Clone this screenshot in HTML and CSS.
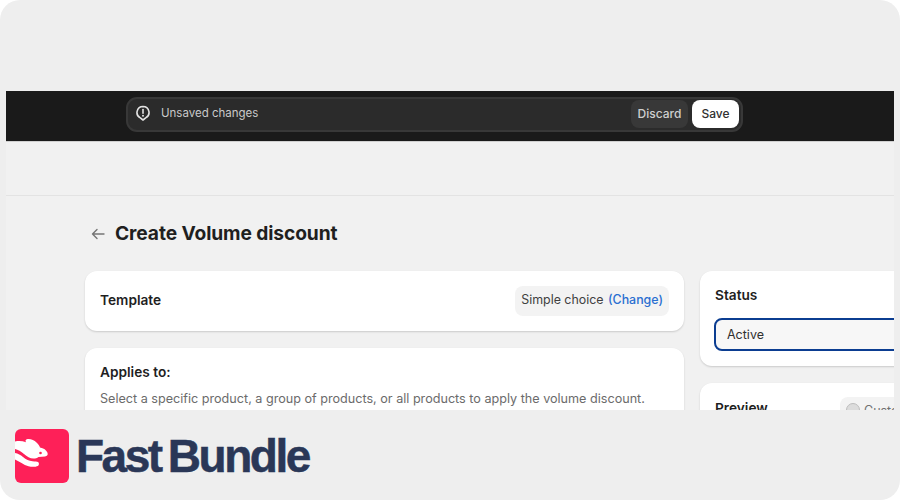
FILE: index.html
```html
<!DOCTYPE html>
<html lang="en">
<head>
<meta charset="utf-8">
<title>Create Volume discount</title>
<link rel="stylesheet" href="styles.css">
</head>
<body>
<div class="frame">
  <div class="shot">
    <div class="topbar">
      <div class="savebar">
        <div class="savebar-msg">
          <svg class="alert-icon" viewBox="0 0 16 16" width="16" height="16" fill="none">
            <path d="M8 1.500a6 6 0 0 1 2.700 11.350L8 15l-2.700-2.150A6 6 0 0 1 8 1.500z" stroke="#e3e3e3" stroke-width="1.600" stroke-linejoin="round"/>
            <path d="M8 4.500v3.800" stroke="#e3e3e3" stroke-width="1.600" stroke-linecap="round"/>
            <circle cx="8" cy="10.700" r="1" fill="#e3e3e3"/>
          </svg>
          <span>Unsaved changes</span>
        </div>
        <div class="savebar-actions">
          <span class="btn btn-discard">Discard</span>
          <span class="btn btn-save">Save</span>
        </div>
      </div>
    </div>
    <div class="strip"></div>
    <div class="page">
      <div class="page-head">
        <svg class="back" viewBox="0 0 14 12" width="14" height="12" fill="none">
          <path d="M13 6H1.500M6 1.500 1.500 6 6 10.500" stroke="#757575" stroke-width="1.400" stroke-linecap="round" stroke-linejoin="round"/>
        </svg>
        <h1>Create Volume discount</h1>
      </div>
      <div class="columns">
        <div class="col-main">
          <section class="card card-template">
            <h2>Template</h2>
            <div class="chip">Simple choice <a class="link">(Change)</a></div>
          </section>
          <section class="card card-applies">
            <h2>Applies to:</h2>
            <p>Select a specific product, a group of products, or all products to apply the volume discount.</p>
          </section>
        </div>
        <div class="col-side">
          <section class="card card-status">
            <h2>Status</h2>
            <div class="select">Active</div>
          </section>
          <section class="card card-preview">
            <h2>Preview</h2>
            <div class="custom-chip"><span class="dot"></span>Customize</div>
          </section>
        </div>
      </div>
    </div>
  </div>
  <div class="brand">
    <svg class="brand-mark" viewBox="0 0 54 54" width="54" height="54">
      <rect width="54" height="54" rx="6" fill="#fe2058"/>
      <path fill="#fff" d="M0 12.500c4-.8 7.500-.5 11 .8-.8-1.500-.5-2.600.8-3C15 9.500 19 11 21.500 13.500c1.800 1.800 3 3.500 3.500 5 3.500.6 6.500 2.600 7.500 5.300.7 2-.3 3.400-2.500 3.700-2 .3-4.500.2-6.500.5-1.500 1-3 1.500-5 1.500-3.500 0-6.500-2-9.500-4.500C6 22.500 3 20.500 0 20z"/>
      <circle cx="25.500" cy="24" r="1.300" fill="#fe2058"/>
      <path fill="#fff" d="M0 24c3 .5 5.500 2 8 4 3 2.500 6 3.800 9.500 4.200 2.500.3 4.500.2 5.500.8 1.300.8 1.300 3.300-.2 4-2 1-6 1.200-9.300.3C8.500 35.800 4.500 32.500 0 30.500z"/>
    </svg>
    <span class="brand-name">Fast Bundle</span>
  </div>
</div>
</body>
</html>
```
FILE: styles.css
```css
* { box-sizing: border-box; }
html, body { margin: 0; padding: 0; background: #fff; }
body { width: 900px; height: 500px; overflow: hidden; font-family: Inter, "Liberation Sans", sans-serif; color: #1a1a1a; }
.frame { width: 900px; height: 500px; background: #eeeeee; border-radius: 20px; padding-top: 91px; overflow: hidden; display: flex; flex-direction: column; }
.shot { height: 319px; margin: 0 6px; background: #f1f1f1; overflow: hidden; flex: none; }
.topbar { height: 50px; background: #1a1a1a; padding: 6px 0 0 120px; box-shadow: 0 1px 0 #d0d0d0; }
.savebar { width: 617px; height: 35px; background: #2b2b2b; border: 2px solid #383838; border-radius: 11px; display: flex; align-items: center; justify-content: space-between; padding: 0 2px 0 7px; }
.savebar-msg { display: flex; align-items: center; gap: 10px; font-size: 11.500px; color: #c9c9c9; margin-top: -3px; }
.alert-icon { flex: none; }
.savebar-actions { display: flex; gap: 4px; margin-top: -1px; }
.btn { height: 28px; border-radius: 8px; font-size: 12px; font-weight: 500; display: flex; align-items: center; justify-content: center; padding-bottom: 1px; }
.btn-discard { width: 57px; background: #383838; color: #cfcfcf; }
.btn-save { width: 47px; background: #fff; color: #303030; }
.strip { height: 55px; border-bottom: 1px solid #e3e3e3; }
.page { padding: 0 0 0 79px; }
.page-head { height: 75px; display: flex; align-items: center; }
.back { margin-left: 6px; margin-right: 10px; flex: none; }
h1 { margin: -2px 0 0; font-size: 19.200px; font-weight: 700; letter-spacing: -0.100px; color: #1f1f1f; }
.columns { display: flex; gap: 16px; }
.col-main { width: 599px; flex: none; display: flex; flex-direction: column; gap: 17px; }
.col-side { width: 300px; flex: none; display: flex; flex-direction: column; gap: 17px; }
.card { background: #fff; border-radius: 12px; box-shadow: 0 1px 2px rgba(0,0,0,0.16); }
h2 { margin: 0; font-size: 13.700px; font-weight: 600; color: #1f1f1f; }
.card-template { height: 60px; display: flex; align-items: center; justify-content: space-between; padding: 0 15px; }
.card-template h2 { margin-top: -2px; }
.chip { height: 30px; margin-top: -1px; background: #f3f3f3; border-radius: 8px; display: flex; align-items: center; gap: 4.500px; padding: 0 6px 3px; font-size: 12.400px; color: #404040; }
.link { color: #2a6fd1; font-weight: 500; }
.card-applies { height: 100px; padding: 16px 15px; }
.card-applies p { margin: 11px 0 0; font-size: 12.620px; color: #6b6b6b; white-space: nowrap; }
.card-status { height: 95px; padding: 16px 15px; }
.select { width: 300px; height: 33px; margin: 15px 0 0 -1px; padding: 0 0 1px 11px; border: 2px solid #0b3d91; border-radius: 8px; background: #f7f7f7; display: flex; align-items: center; font-size: 12.500px; color: #303030; }
.card-preview { height: 80px; padding: 17px 15px; position: relative; }
.custom-chip { position: absolute; left: 140px; top: 14px; height: 26px; padding-left: 6px; background: #f3f3f3; border-radius: 8px; display: flex; align-items: center; gap: 4px; font-size: 12.500px; color: #707070; white-space: nowrap; }
.dot { width: 14px; height: 14px; border-radius: 50%; background: #dcdcdc; border: 1px solid #bdbdbd; }
.brand { height: 90px; display: flex; align-items: flex-start; padding: 19px 0 0 15px; }
.brand-mark { flex: none; display: block; }
.brand-name { margin-left: 7px; font-family: "Liberation Sans", Arial, sans-serif; font-size: 46px; line-height: 55px; font-weight: 700; letter-spacing: -2.500px; word-spacing: -3px; color: #2a3757; white-space: nowrap; -webkit-text-stroke: 0.500px #2a3757; }
```
